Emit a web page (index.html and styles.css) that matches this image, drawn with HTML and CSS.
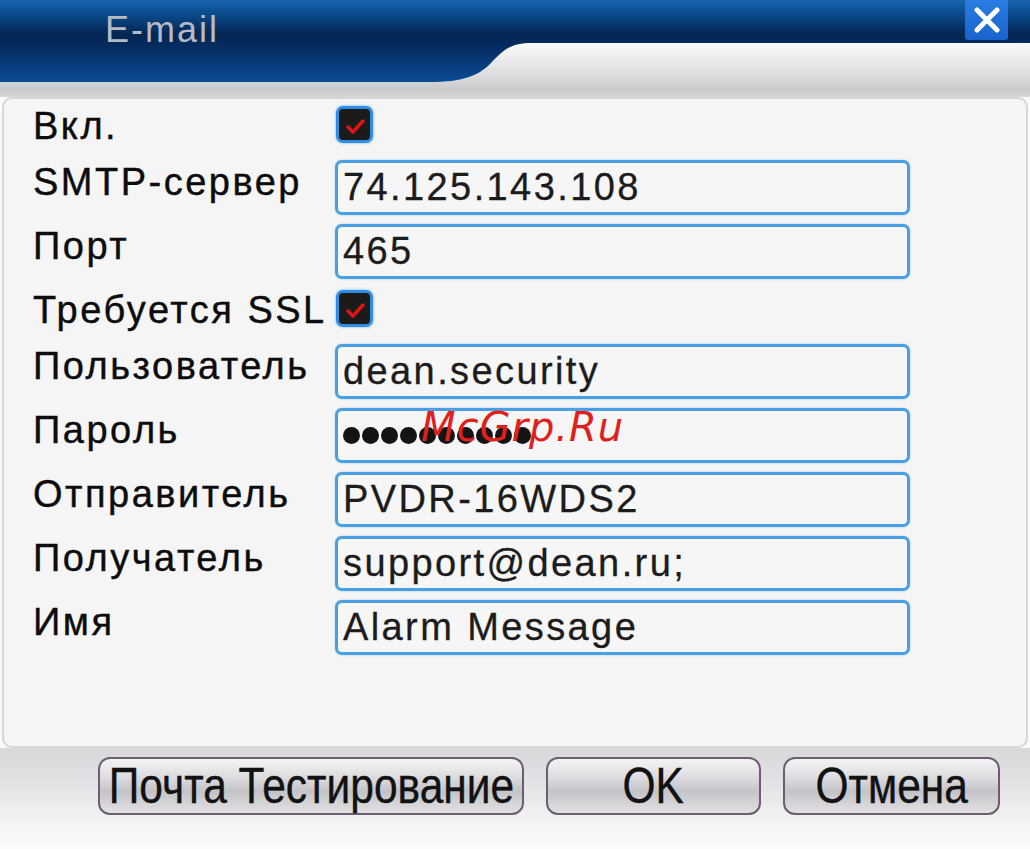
FILE: index.html
```
<!DOCTYPE html>
<html lang="ru">
<head>
  <meta charset="UTF-8">
  <title>E-mail</title>
  <link rel="stylesheet" href="styles.css">
</head>
<body>
  <div class="window">
    <div class="titlebar">
      <svg class="titlebar-bg" width="1030" height="84" viewBox="0 0 1030 84">
        <defs>
          <linearGradient id="blue" x1="0" y1="0" x2="0" y2="1">
            <stop offset="0" stop-color="#1766ae"/>
            <stop offset="0.14" stop-color="#0b4f93"/>
            <stop offset="0.42" stop-color="#042653"/>
            <stop offset="0.55" stop-color="#052b5e"/>
            <stop offset="1" stop-color="#0b4c96"/>
          </linearGradient>
        </defs>
        <path d="M0,0 H1030 V43 H532 C508,43 502,52 490,64 C478,76 462,82 430,82 H0 Z" fill="url(#blue)"/>
      </svg>
      <span class="title">E-mail</span>
      <div class="close-btn">
        <svg width="28" height="26" viewBox="0 0 28 26">
          <path d="M4,3 L24,23 M24,3 L4,23" stroke="#fff" stroke-width="5" stroke-linecap="round"/>
        </svg>
      </div>
    </div>

    <div class="panel">
      <div class="form">
        <div class="label short">Вкл.</div>
        <div class="field"><span class="check"><svg width="28" height="28" viewBox="0 0 28 28"><path d="M7,17 L12,22 L22,11" stroke="#e01414" stroke-width="3.5" fill="none" stroke-linecap="round"/></svg></span></div>

        <div class="label">SMTP-сервер</div>
        <div class="field"><div class="input">74.125.143.108</div></div>

        <div class="label">Порт</div>
        <div class="field"><div class="input">465</div></div>

        <div class="label short">Требуется SSL</div>
        <div class="field"><span class="check"><svg width="28" height="28" viewBox="0 0 28 28"><path d="M7,17 L12,22 L22,11" stroke="#e01414" stroke-width="3.5" fill="none" stroke-linecap="round"/></svg></span></div>

        <div class="label">Пользователь</div>
        <div class="field"><div class="input">dean.security</div></div>

        <div class="label">Пароль</div>
        <div class="field">
          <div class="input">
            <span class="dot"></span><span class="dot"></span><span class="dot"></span><span class="dot"></span><span class="dot"></span>
            <span class="dot"></span><span class="dot"></span><span class="dot"></span><span class="dot"></span><span class="dot"></span>
          </div>
          <span class="watermark">McGrp.Ru</span>
        </div>

        <div class="label">Отправитель</div>
        <div class="field"><div class="input">PVDR-16WDS2</div></div>

        <div class="label">Получатель</div>
        <div class="field"><div class="input">support@dean.ru;</div></div>

        <div class="label">Имя</div>
        <div class="field"><div class="input">Alarm Message</div></div>
      </div>
    </div>

    <div class="footer">
      <button class="btn btn-test"><span>Почта Тестирование</span></button>
      <button class="btn btn-ok"><span>OK</span></button>
      <button class="btn btn-cancel"><span>Отмена</span></button>
    </div>
  </div>
</body>
</html>
```

FILE: styles.css
```
* {
  margin: 0;
  padding: 0;
  box-sizing: border-box;
}

body {
  width: 1030px;
  height: 849px;
  overflow: hidden;
  font-family: 'Liberation Sans', Arial, sans-serif;
  background: #fafafa;
}

.window {
  width: 1030px;
  height: 849px;
  display: flex;
  flex-direction: column;
}

/* title bar */
.titlebar {
  position: relative;
  height: 97px;
  display: flex;
  align-items: flex-start;
  background: linear-gradient(#f9f9f9 43px, #f3f3f4 52px, #dcdcde 75px, #c9cacd 90px, #d8d8da 97px);
}

.titlebar-bg {
  position: absolute;
  top: 0;
  left: 0;
}

.title {
  position: relative;
  margin: 12px 0 0 105px;
  font-size: 36px;
  line-height: 1;
  letter-spacing: 2px;
  color: #b7bbc3;
}

.close-btn {
  position: relative;
  margin-left: auto;
  margin-right: 22px;
  width: 43px;
  height: 40px;
  border-radius: 0 0 3px 3px;
  background: linear-gradient(#2a7de2, #1a62cc);
  display: flex;
  align-items: center;
  justify-content: center;
}

/* panel */
.panel {
  margin: 0 2px;
  height: 651px;
  background: #f5f5f5;
  border: 2px solid #d6d6d8;
  border-radius: 10px;
}

.form {
  display: grid;
  grid-template-columns: 302px 575px;
  grid-template-rows: 56px 64px 64px 56px repeat(5, 64px);
  padding-left: 29px;
}

.label {
  display: flex;
  align-items: center;
  padding-bottom: 10px;
  font-size: 38px;
  letter-spacing: 2.5px;
  color: #0c0c0c;
  -webkit-text-stroke: 0.4px #0c0c0c;
  white-space: nowrap;
}

.label.short {
  padding-bottom: 2px;
}

.field {
  position: relative;
  display: flex;
  align-items: center;
}

.input {
  width: 575px;
  height: 55px;
  display: flex;
  align-items: center;
  gap: 2px;
  padding-left: 5px;
  border: 3px solid #4a9fe2;
  border-radius: 7px;
  background: #f6f6f6;
  box-shadow: 0 0 2px #8fc6f2;
  font-size: 38px;
  letter-spacing: 2.4px;
  color: #1c1c1c;
  -webkit-text-stroke: 0.3px #1c1c1c;
  white-space: nowrap;
}

.dot {
  width: 17px;
  height: 17px;
  border-radius: 50%;
  background: #141414;
}

.check {
  display: flex;
  align-items: center;
  justify-content: center;
  width: 37px;
  height: 37px;
  margin: 0 0 6px 1px;
  background: #1b1b1b;
  border: 3px solid #2f8de4;
  border-radius: 7px;
  box-shadow: 0 0 3px #6ab4f0;
}

.watermark {
  position: absolute;
  left: 86px;
  top: 1px;
  font-family: 'DejaVu Sans', sans-serif;
  font-style: italic;
  font-size: 40px;
  letter-spacing: 1px;
  color: #e0201c;
}

/* footer buttons */
.footer {
  flex: 1;
  display: flex;
  justify-content: flex-end;
  align-items: flex-start;
  gap: 22px;
  padding: 9px 30px 0 0;
  background: linear-gradient(#d8d8da 0, #e4e4e6 40px, #f4f4f4 75px, #fbfbfb 101px);
}

.btn {
  height: 58px;
  display: flex;
  align-items: center;
  justify-content: center;
  border: 2px solid #6d5d70;
  border-radius: 12px;
  background: linear-gradient(#f4f4f6 0%, #dcdce0 35%, #c4c4c8 60%, #e2e2e4 100%);
  font-family: 'Liberation Sans', sans-serif;
  font-size: 50px;
  line-height: 1;
  color: #121212;
  -webkit-text-stroke: 0.4px #121212;
  white-space: nowrap;
}

.btn span {
  display: inline-block;
  transform: scaleX(0.85);
}

.btn-test {
  width: 426px;
}

.btn-ok {
  width: 215px;
}

.btn-cancel {
  width: 217px;
}
```
